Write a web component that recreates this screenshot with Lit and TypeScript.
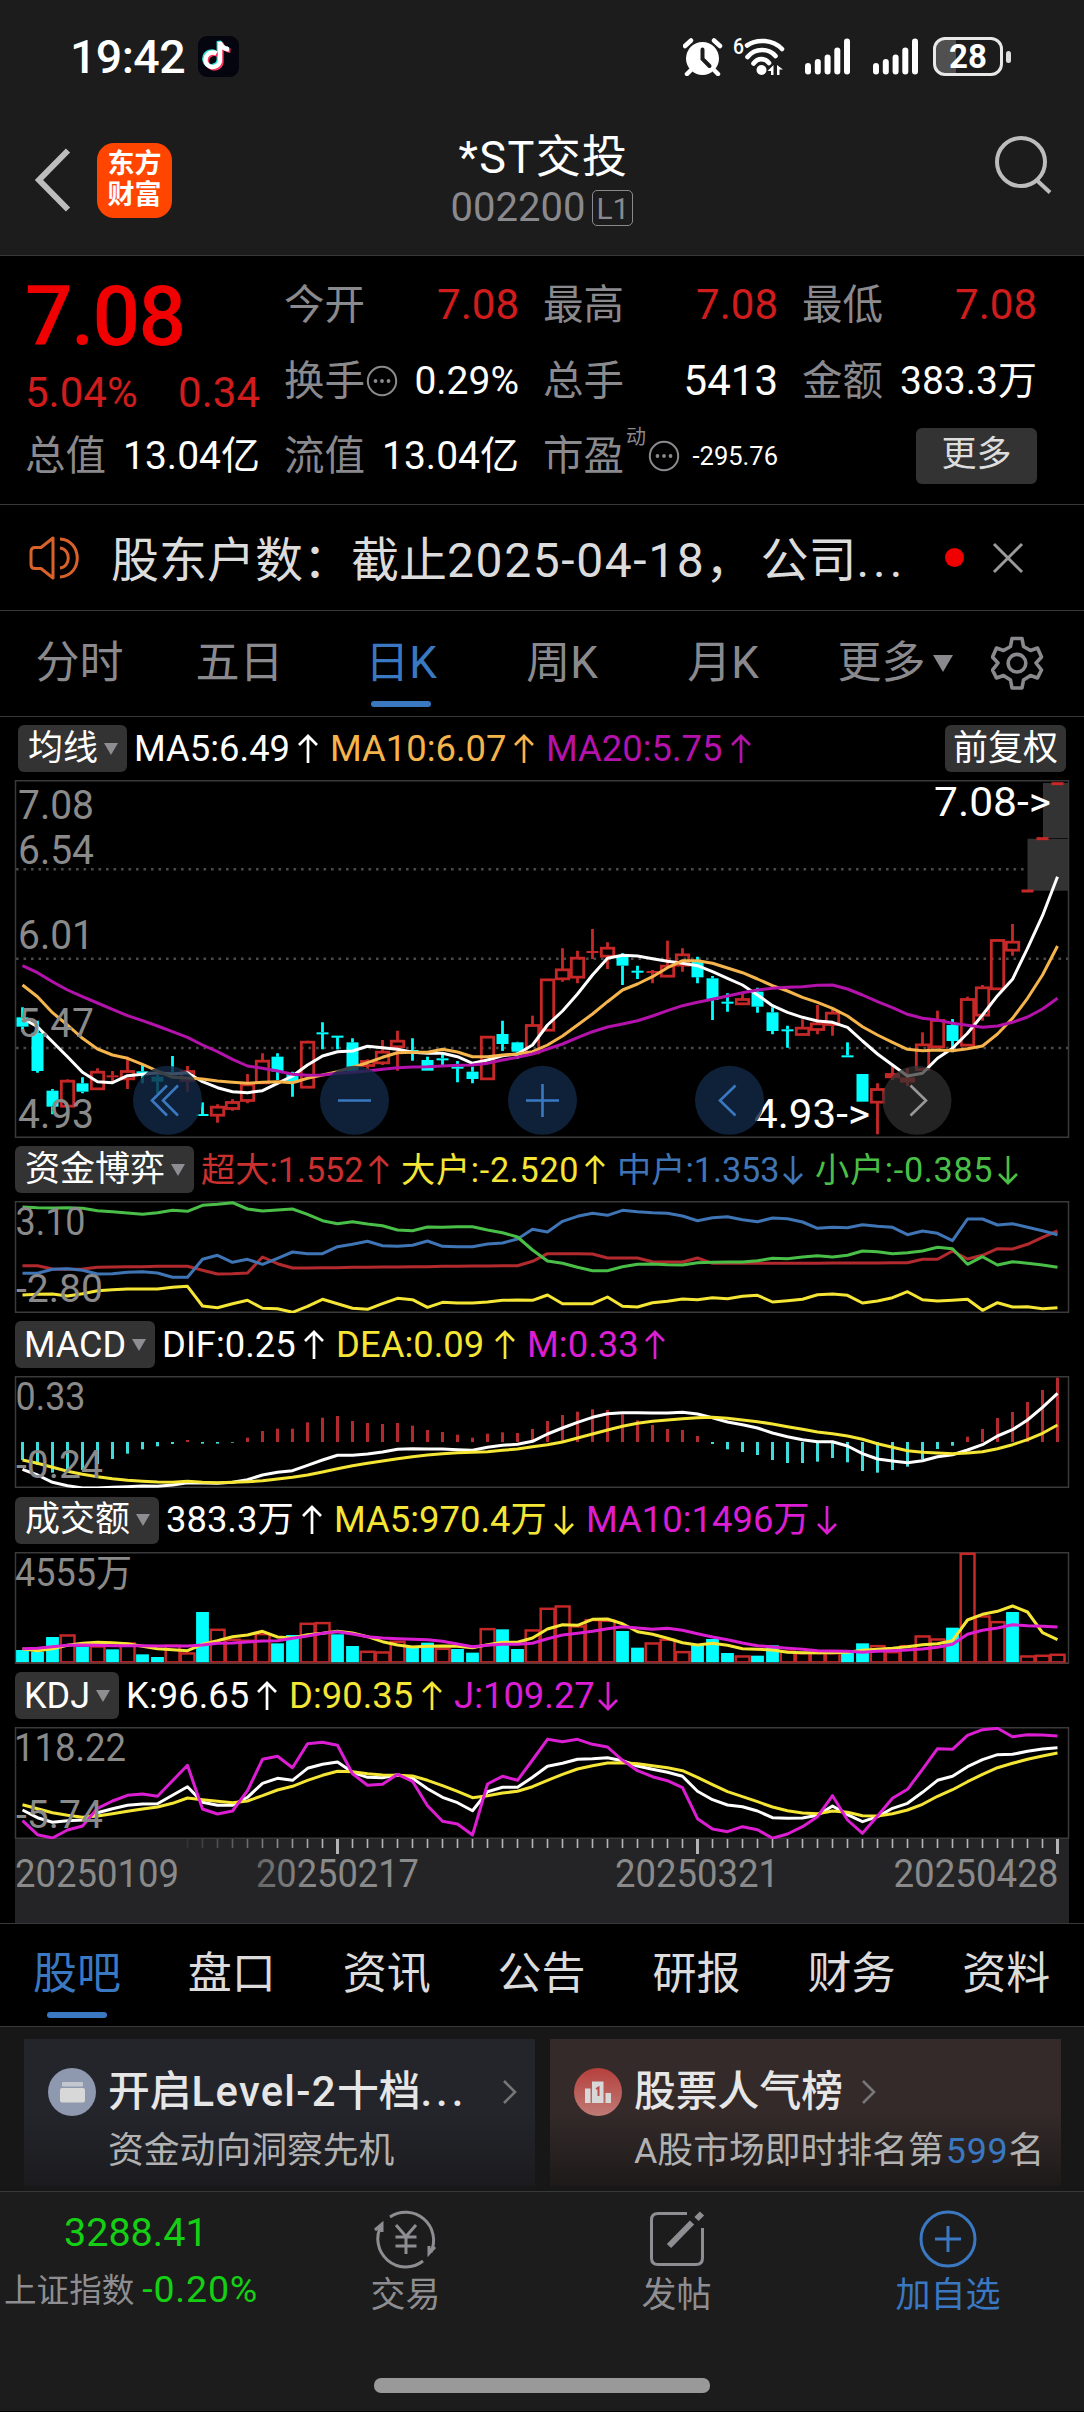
import { LitElement, html, svg, css } from "lit";
import { customElement } from "lit/decorators.js";
import { classMap } from "lit/directives/class-map.js";

/* ---------- chart data: 70 sessions, heights in thirds of a pixel ---------- */

type Candle = [string, number, number, number, number];

const X0 = 22.5;
const STEP = 15;
const cx = (i: number) => X0 + i * STEP;

const RED = "#c62828";
const CYAN = "#00ffff";

const CANDLES: Candle[] = [
  ["c", 712, 742, 770, 785], ["c", 752, 788, 903, 908], ["c", 957, 962, 1010, 1033], ["r", 928, 932, 1010, 1010],
  ["c", 922, 940, 965, 970], ["r", 895, 905, 958, 960], ["r", 903, 916, 922, 938], ["r", 860, 903, 928, 957],
  ["c", 885, 904, 909, 940], ["c", 915, 920, 935, 970], ["c", 858, 907, 912, 915], ["r", 888, 903, 933, 965],
  ["c", 997, 1032, 1038, 1038], ["r", 1003, 1010, 1037, 1058], ["r", 988, 996, 1017, 1022], ["r", 912, 943, 993, 1000],
  ["r", 850, 872, 940, 942], ["c", 850, 860, 905, 930], ["c", 905, 910, 938, 980], ["r", 812, 815, 953, 955],
  ["c", 757, 787, 792, 838], ["c", 797, 797, 802, 838], ["c", 805, 817, 903, 905], ["r", 868, 873, 888, 898],
  ["r", 810, 845, 880, 885], ["r", 782, 812, 832, 902], ["c", 805, 840, 845, 872], ["c", 860, 870, 902, 902],
  ["c", 852, 865, 870, 887], ["c", 873, 890, 895, 937], ["c", 890, 905, 927, 940], ["r", 798, 800, 928, 928],
  ["c", 752, 792, 822, 843], ["c", 815, 817, 845, 867], ["r", 737, 765, 850, 850], ["r", 628, 628, 782, 782],
  ["r", 535, 598, 628, 635], ["r", 542, 563, 623, 640], ["r", 477, 543, 547, 567], ["r", 517, 533, 560, 597],
  ["c", 550, 560, 587, 645], ["c", 587, 602, 607, 627], ["r", 600, 603, 608, 640], ["r", 512, 587, 620, 620],
  ["r", 535, 553, 587, 605], ["c", 560, 575, 622, 640], ["c", 618, 625, 690, 750], ["c", 670, 695, 700, 725],
  ["r", 672, 687, 703, 703], ["c", 653, 665, 710, 728], ["c", 712, 727, 783, 793], ["c", 767, 778, 783, 833],
  ["r", 748, 773, 795, 795], ["r", 705, 760, 780, 793], ["r", 715, 728, 765, 797], ["c", 817, 856, 862, 862],
  ["c", 912, 912, 995, 995], ["r", 940, 957, 998, 1093], ["r", 888, 912, 922, 930], ["r", 895, 925, 935, 948],
  ["r", 787, 823, 900, 900], ["r", 722, 750, 832, 832], ["c", 747, 765, 813, 847], ["r", 680, 687, 827, 827],
  ["r", 645, 652, 737, 752], ["r", 508, 510, 658, 658], ["r", 462, 515, 542, 557], ["r", 363, 363, 363, 363],
  ["r", 206, 206, 206, 206], ["r", 41, 41, 41, 41],
];

const MA5 = [745, 770, 815, 860, 907, 935, 938, 917, 913, 908, 912, 908, 935, 953, 965, 968, 962, 940, 918, 885, 858, 845, 843, 829, 833, 838, 847, 850, 850, 860, 880, 870, 857, 852, 825, 765, 723, 672, 615, 565, 556, 558, 566, 574, 580, 587, 605, 625, 645, 675, 707, 727, 742, 753, 757, 772, 813, 852, 885, 918, 910, 865, 835, 790, 735, 677, 628, 535, 437, 320];
const MA10 = [645, 680, 728, 765, 805, 837, 855, 865, 883, 903, 922, 924, 927, 933, 937, 940, 937, 935, 938, 925, 915, 905, 892, 878, 862, 848, 847, 847, 838, 846, 860, 860, 855, 852, 845, 825, 798, 765, 732, 695, 660, 642, 620, 593, 572, 572, 580, 594, 608, 627, 647, 663, 682, 697, 715, 738, 770, 795, 817, 838, 842, 840, 842, 836, 828, 792, 745, 685, 615, 528];
const MA20 = [587, 608, 635, 660, 680, 699, 718, 737, 752, 768, 785, 802, 825, 845, 868, 888, 895, 903, 913, 916, 915, 910, 907, 903, 898, 893, 891, 890, 888, 886, 885, 880, 870, 862, 852, 837, 822, 803, 785, 771, 762, 752, 738, 722, 707, 697, 688, 678, 668, 660, 655, 652, 650, 646, 645, 657, 675, 695, 713, 733, 745, 750, 760, 766, 772, 768, 757, 741, 717, 685];

const FLOW_SMALL = [201, 203, 204, 203, 205, 212, 215, 219, 223, 218, 211, 214, 196, 193, 188, 207, 213, 210, 207, 223, 242, 251, 245, 252, 257, 270, 272, 261, 262, 260, 260, 270, 278, 291, 330, 363, 370, 382, 392, 392, 380, 373, 372, 374, 375, 368, 367, 366, 366, 362, 355, 356, 351, 347, 351, 346, 333, 335, 341, 338, 333, 322, 326, 373, 350, 375, 365, 370, 375, 382];
const FLOW_MID = [400, 400, 388, 386, 391, 402, 401, 397, 395, 399, 412, 412, 358, 346, 367, 358, 373, 355, 336, 341, 341, 320, 313, 304, 317, 319, 316, 303, 319, 320, 320, 312, 309, 297, 268, 276, 244, 229, 220, 226, 211, 215, 218, 220, 228, 242, 233, 230, 239, 245, 234, 236, 246, 265, 262, 263, 254, 259, 262, 284, 273, 280, 302, 237, 237, 255, 251, 262, 272, 284];
const FLOW_SUPER = [377, 377, 387, 388, 387, 382, 381, 380, 380, 379, 379, 379, 391, 402, 401, 399, 351, 371, 384, 384, 383, 383, 382, 382, 381, 381, 380, 380, 379, 379, 378, 378, 377, 377, 364, 341, 341, 341, 342, 354, 354, 354, 365, 366, 366, 354, 370, 370, 370, 370, 370, 370, 370, 370, 369, 369, 369, 369, 368, 368, 358, 358, 333, 357, 346, 326, 327, 313, 292, 273];
const FLOW_BIG = [465, 463, 462, 468, 461, 452, 449, 447, 447, 447, 442, 439, 498, 503, 491, 481, 505, 506, 517, 499, 478, 491, 505, 508, 491, 475, 479, 502, 487, 489, 489, 486, 481, 480, 481, 465, 491, 491, 491, 471, 499, 501, 488, 484, 477, 479, 473, 476, 469, 466, 486, 482, 478, 464, 462, 466, 489, 483, 473, 455, 479, 483, 481, 478, 511, 488, 501, 500, 506, 503];

const MACD = [960, 975, 998, 998, 990, 972, 957, 941, 928, 919, 912, 900, 911, 911, 908, 893, 873, 866, 866, 847, 833, 828, 843, 849, 852, 849, 857, 870, 876, 884, 893, 881, 877, 879, 867, 843, 825, 815, 808, 810, 823, 841, 855, 867, 870, 888, 912, 928, 936, 945, 960, 969, 969, 965, 954, 967, 993, 998, 990, 980, 958, 927, 917, 890, 867, 834, 816, 786, 750, 713];
const DIF = [988, 1005, 1027, 1037, 1044, 1044, 1042, 1040, 1038, 1039, 1035, 1028, 1029, 1030, 1027, 1019, 1005, 997, 992, 976, 960, 946, 946, 942, 936, 928, 926, 927, 927, 929, 931, 922, 916, 913, 904, 882, 864, 847, 832, 821, 818, 818, 819, 819, 817, 822, 833, 846, 854, 864, 879, 890, 899, 905, 905, 918, 941, 957, 963, 968, 962, 950, 944, 930, 914, 888, 869, 840, 802, 760];
const DEA = [960, 970, 982, 994, 1003, 1010, 1016, 1021, 1024, 1026, 1027, 1024, 1027, 1028, 1027, 1025, 1022, 1017, 1012, 1005, 996, 986, 977, 970, 963, 956, 950, 945, 941, 938, 937, 935, 931, 927, 920, 914, 906, 894, 882, 870, 859, 850, 844, 840, 836, 833, 832, 835, 840, 845, 852, 860, 868, 876, 881, 888, 898, 911, 922, 932, 937, 939, 941, 939, 935, 926, 914, 899, 880, 855];

const VOLUME: [string, number][] = [
  ["c", 480], ["c", 485], ["c", 441], ["r", 434], ["c", 470], ["r", 467], ["c", 478], ["r", 458], ["c", 493], ["c", 501],
  ["r", 465], ["r", 488], ["c", 366], ["r", 417], ["r", 447], ["r", 450], ["r", 430], ["c", 460], ["c", 435], ["r", 399],
  ["r", 397], ["c", 433], ["c", 468], ["r", 483], ["r", 485], ["r", 453], ["c", 470], ["c", 458], ["r", 474], ["c", 477],
  ["c", 488], ["r", 415], ["c", 418], ["c", 477], ["r", 419], ["r", 354], ["r", 347], ["r", 407], ["r", 388], ["r", 390],
  ["c", 423], ["c", 473], ["r", 458], ["r", 447], ["r", 484], ["c", 465], ["c", 447], ["c", 489], ["r", 497], ["c", 497],
  ["c", 466], ["r", 482], ["r", 487], ["r", 487], ["r", 487], ["c", 487], ["c", 460], ["r", 466], ["r", 484], ["r", 466],
  ["r", 437], ["r", 446], ["c", 413], ["r", 189], ["r", 377], ["r", 394], ["c", 366], ["r", 497], ["r", 495], ["r", 492],
];
const VMA5 = [477, 482, 476, 466, 460, 457, 458, 461, 469, 476, 479, 482, 463, 452, 440, 435, 424, 441, 444, 434, 430, 424, 429, 440, 455, 465, 471, 469, 468, 469, 473, 464, 457, 457, 444, 417, 404, 406, 388, 387, 401, 425, 433, 445, 458, 465, 460, 466, 476, 478, 480, 487, 488, 488, 488, 487, 481, 478, 475, 470, 464, 461, 452, 390, 373, 364, 348, 366, 428, 449];
const VMA10 = [476, 475, 470, 466, 465, 466, 467, 467, 467, 468, 468, 468, 465, 460, 459, 456, 453, 452, 445, 438, 430, 425, 432, 440, 444, 446, 448, 449, 454, 462, 470, 466, 463, 463, 460, 446, 435, 430, 424, 416, 410, 414, 418, 415, 421, 431, 441, 449, 459, 467, 471, 475, 478, 482, 483, 484, 487, 484, 482, 480, 477, 472, 463, 433, 421, 414, 404, 407, 409, 411];

const K = [960, 983, 997, 992, 990, 968, 956, 946, 942, 941, 916, 890, 937, 946, 946, 922, 880, 865, 871, 835, 823, 816, 847, 862, 863, 854, 865, 896, 922, 938, 962, 905, 892, 892, 862, 829, 820, 808, 806, 803, 812, 828, 838, 847, 859, 904, 929, 945, 950, 963, 983, 985, 984, 976, 948, 974, 995, 980, 955, 940, 907, 871, 859, 830, 809, 794, 793, 784, 777, 773];
const D = [944, 956, 968, 976, 982, 978, 971, 964, 957, 951, 940, 924, 929, 934, 938, 933, 917, 900, 889, 871, 856, 844, 845, 851, 855, 856, 858, 871, 887, 904, 923, 917, 909, 904, 890, 871, 853, 837, 827, 819, 818, 821, 827, 833, 842, 862, 884, 905, 920, 935, 951, 962, 969, 971, 963, 967, 977, 978, 971, 960, 943, 919, 899, 875, 853, 833, 820, 808, 798, 789];
const J = [992, 1034, 1044, 1020, 1008, 955, 933, 916, 912, 919, 872, 826, 957, 972, 963, 902, 808, 799, 833, 761, 757, 766, 851, 886, 883, 853, 874, 947, 994, 1002, 1035, 882, 859, 871, 810, 748, 755, 748, 763, 771, 811, 842, 860, 872, 893, 986, 1017, 1025, 1010, 1019, 1045, 1032, 1010, 980, 917, 990, 1030, 978, 925, 898, 838, 776, 778, 736, 719, 715, 740, 734, 735, 738];

const line = (d: number[], off: number, color: string) => svg`
  <polyline fill="none" stroke=${color} stroke-width="3" stroke-linejoin="round"
    points=${d.map((v, i) => `${cx(i)},${(v / 3 - off).toFixed(1)}`).join(" ")} />`;

const label = (t: string, x: number, y: number, w: number, size = 38, fill = "#8a8a8a") => svg`
  <text x=${x} y=${y} font-size=${size} fill=${fill} textLength=${w} lengthAdjust="spacingAndGlyphs">${t}</text>`;

/* ---------- chart panels ---------- */

@customElement("chart-panel")
class ChartPanel extends LitElement {
  static properties = { kind: {} };
  declare kind: string;

  static styles = css`
    :host { display: block; }
    svg { display: block; }
    text { font-family: Roboto, "Noto Sans CJK SC", sans-serif; }
  `;

  private frame(h: number) {
    return svg`<rect x="15.5" y="0.75" width="1053" height=${h - 1.5} fill="none" stroke="#3a3a3a" stroke-width="1.5" />`;
  }

  private candle([t, hi, a, b, lo]: Candle, i: number) {
    const y = (v: number) => v / 3 - 10;
    const x = cx(i);
    const c = t === "r" ? RED : CYAN;
    if (hi === lo) return svg`<rect x=${x - 6} y=${y(a) - 1.5} width="12" height="3" fill=${c} />`;
    const wick = svg`
      <path d="M${x} ${y(hi)}V${y(a)}M${x} ${y(b)}V${y(lo)}" stroke=${c} stroke-width="2.8" />`;
    const body = t === "c" || b - a < 8
      ? svg`<rect x=${x - 6} y=${y(a)} width="12" height=${Math.max((b - a) / 3, 2)} fill=${c} />`
      : svg`<rect x=${x - 6.2} y=${y(a) + 0.5} width="12.4" height=${(b - a) / 3 - 1} fill="none" stroke=${c} stroke-width="2.8" />`;
    return svg`${wick}${body}`;
  }

  private main() {
    return html`<svg width="1084" height="358" viewBox="0 0 1084 358">
      ${[89.3, 178.7, 268].map((y) => svg`<path d="M16 ${y}H1068" stroke="#4a4a4a" stroke-width="2.6" stroke-dasharray="2.6 4.9" />`)}
      ${this.frame(358)}
      <rect x="1027.5" y="58.7" width="40.5" height="52" fill="#333" />
      <rect x="1043" y="3" width="25" height="55" fill="#333" />
      ${CANDLES.map((c, i) => this.candle(c, i))}
      ${line(MA5, 10, "#fff")}${line(MA10, 10, "#f5b44c")}${line(MA20, 10, "#b312ab")}
      ${label("7.08", 18, 39, 76, 40)}${label("6.54", 18, 84, 76, 40)}${label("6.01", 18, 169, 76, 40)}
      ${label("5.47", 18, 257, 76, 40)}${label("4.93", 18, 348, 76, 40)}
      ${label("7.08->", 934, 35.5, 117, 40, "#fff")}${label("4.93->", 754, 348, 116, 40, "#fff")}
      ${[167.5, 354.5, 542.5, 729.5].map((x) => svg`<circle cx=${x} cy="320.3" r="34.5" fill="rgba(17,40,68,.82)" />`)}
      <circle cx="917" cy="320.3" r="34.5" fill="rgba(48,48,48,.72)" />
      <g fill="none" stroke="#3a78c2" stroke-width="2.6">
        <path d="M167 305.5L152 320.5L167 335.5M178 305.5L163 320.5L178 335.5" />
        <path d="M338 320.5H371" />
        <path d="M526 320.5H559M542.5 304V337" />
        <path d="M735.5 305.5L720 320.5L735.5 335.5" />
        <path d="M910.5 305.5L926 320.5L910.5 335.5" stroke="#999" />
      </g>
    </svg>`;
  }

  private flow() {
    return html`<svg width="1084" height="112" viewBox="0 0 1084 112">
      ${this.frame(112)}
      ${line(FLOW_SUPER, 61, "#b22a2e")}${line(FLOW_BIG, 61, "#f5e636")}
      ${line(FLOW_MID, 61, "#3f74b5")}${line(FLOW_SMALL, 61, "#4abf48")}
      ${label("3.10", 15.5, 34, 70)}${label("-2.80", 16, 101.3, 87)}
    </svg>`;
  }

  private macd() {
    const z = 906 / 3 - 236;
    return html`<svg width="1084" height="112" viewBox="0 0 1084 112">
      ${this.frame(112)}
      ${MACD.map((v, i) => svg`<path d="M${cx(i)} ${z}V${v / 3 - 236}" stroke=${v > 906 ? "#40dcdc" : "#b22a2e"} stroke-width="3" />`)}
      ${line(DIF, 236, "#fff")}${line(DEA, 236, "#f5e636")}
      ${label("0.33", 15.5, 34, 70)}${label("-0.24", 16, 101.7, 87)}
    </svg>`;
  }

  private volume() {
    return html`<svg width="1084" height="112" viewBox="0 0 1084 112">
      ${this.frame(112)}
      ${VOLUME.map(([t, v], i) => {
        const y = v / 3 - 62;
        return t === "c"
          ? svg`<rect x=${cx(i) - 6.4} y=${y} width="12.8" height=${110.5 - y} fill=${CYAN} />`
          : svg`<rect x=${cx(i) - 6.8} y=${y + 0.8} width="13.8" height=${109.6 - y} fill="none" stroke=${RED} stroke-width="2.5" />`;
      })}
      <path d="M15 111H1068" stroke="#5a3434" stroke-width="1.6" />
      ${line(VMA5, 62, "#f5e636")}${line(VMA10, 62, "#dc1ed2")}
      ${label("4555万", 15, 34, 117)}
    </svg>`;
  }

  private kdj() {
    return html`<svg width="1084" height="112" viewBox="0 0 1084 112">
      ${this.frame(112)}
      ${line(K, 237, "#fff")}${line(D, 237, "#f5e636")}${line(J, 237, "#dc1ed2")}
      ${label("118.22", 14, 34, 112)}${label("-5.74", 16, 101.3, 87)}
    </svg>`;
  }

  private axis() {
    const ticks = Array.from({ length: 59 }, (_, n) => n + 11);
    const major = [21, 45, 69];
    return html`<svg width="1084" height="84" viewBox="0 0 1084 84">
      <defs><linearGradient id="fade"><stop offset="0" stop-color="#666" /><stop offset=".35" stop-color="#8a8a8a" /></linearGradient></defs>
      <rect x="15" width="1054" height="84" fill="#242426" />
      ${ticks.map((i) => {
        const big = major.includes(i);
        return svg`<path d="M${cx(i)} 0V${big ? 15 : 9}" stroke="#b4b4b4" stroke-width=${big ? 3 : 1.6} opacity=${Math.min(1, (i - 10) / 10)} />`;
      })}
      ${label("20250109", 15, 47.7, 164)}${label("20250217", 256, 47.7, 163, 38, "url(#fade)")}
      ${label("20250321", 615, 47.7, 164)}${label("20250428", 893.5, 47.7, 165)}
    </svg>`;
  }

  render() {
    switch (this.kind) {
      case "main": return this.main();
      case "flow": return this.flow();
      case "macd": return this.macd();
      case "volume": return this.volume();
      case "kdj": return this.kdj();
      default: return this.axis();
    }
  }
}

/* ---------- indicator legend ---------- */

type LegendItem = [text: string, color: string, dir: "up" | "down", width: number];

@customElement("chart-legend")
class ChartLegend extends LitElement {
  static properties = { name: {}, items: { attribute: false }, tail: {} };
  declare name: string;
  declare items: LegendItem[];
  declare tail?: string;

  static styles = css`
    :host { display: flex; align-items: center; height: 63px; padding: 0 18px 0 15px; box-sizing: border-box;
      font-size: 35px; line-height: 46px; color: #fff; white-space: nowrap; }
    :host([tall]) { height: 64px; }
    :host([first]) { padding-left: 18px; }
    .chip { height: 47px; box-sizing: border-box; background: #333; border-radius: 6px; display: flex; align-items: center;
      padding: 0 9px 0 10px; gap: 6px; margin-right: 7px; }
    .chip.latin { font-size: 36px; padding-left: 9px; }
    .tri { width: 0; height: 0; border: 7.5px solid transparent; border-top: 12px solid #8d8d92; border-bottom: 0; }
    .item { display: flex; align-items: center; font-size: 36.4px; }
    :host([dense]) .item { font-size: 34.2px; }
    .item svg { margin: 0 11px 0 8px; flex: none; }
    .neg { letter-spacing: .7px; }
    .tail { margin-left: auto; padding: 0 8px; margin-right: 0; }
  `;

  render() {
    const latin = /^[A-Z]+$/.test(this.name);
    return html`
      <div class=${classMap({ chip: true, latin })}><span>${this.name}</span><i class="tri"></i></div>
      ${this.items.map(([t, c, dir, w]) => html`
        <div class="item" style="color:${c}">
          <span class=${classMap({ neg: t.includes("-") })} style="width:${w}px">${t}</span>
          <svg width="22" height="32" viewBox="0 0 22 32" fill="none" stroke="currentColor" stroke-width="2.7">
            <path d=${dir === "up" ? "M11 30V3M2 12L11 3L20 12" : "M11 2V29M2 20L11 29L20 20"} />
          </svg>
        </div>`)}
      ${this.tail ? html`<div class="chip tail">${this.tail}</div>` : ""}
    `;
  }
}

/* ---------- page ---------- */

const dots = html`<svg class="dots" width="32" height="32" viewBox="0 0 32 32" fill="none" stroke="#8a8a8e" stroke-width="2">
  <circle cx="16" cy="16" r="14.2" /><g fill="#8a8a8e" stroke="none"><circle cx="9.5" cy="16" r="1.9" /><circle cx="16" cy="16" r="1.9" /><circle cx="22.5" cy="16" r="1.9" /></g></svg>`;

const bars = html`<svg class="bars" width="46" height="38" viewBox="0 0 46 38" fill="#fff">
  <rect x="0" y="25" width="6" height="11.5" rx="3" /><rect x="9.8" y="21" width="6" height="15.5" rx="3" />
  <rect x="19.6" y="16.5" width="6" height="20" rx="3" /><rect x="29.3" y="9.5" width="6" height="27" rx="3" />
  <rect x="39" y="0.5" width="6" height="36" rx="3" /></svg>`;

@customElement("app-root")
class AppRoot extends LitElement {
  static styles = css`
    :host { display: block; width: 1084px; height: 2412px; overflow: hidden; background: #000; color: #fff;
      font-family: Roboto, "Noto Sans CJK SC", sans-serif; white-space: nowrap; }
    svg { display: block; flex: none; }
    .top { background: #1c1c1c; height: 256px; box-sizing: border-box; border-bottom: 1.5px solid #383838; }
    .status { display: flex; align-items: center; height: 113px; padding: 0 74px 0 70px; }
    .clock { font-size: 46.5px; line-height: 50px; font-weight: 500; width: 128px; letter-spacing: -.6px; }
    .status .alarm { margin-left: auto; }
    .battery { display: flex; align-items: center; justify-content: center; width: 70px; height: 39px; box-sizing: border-box;
      border: 3px solid #e8e8e8; border-radius: 12px; background: linear-gradient(90deg, #505050 32%, transparent 32%);
      font-size: 33px; font-weight: 700; line-height: 33px; margin-left: 14px; }
    .nub { width: 5px; height: 12px; border-radius: 3px; background: #ddd; margin-left: 3px; margin-right: -1px; }
    .bars + .bars { margin-left: 22px; }
    .wifi { margin: 0 18px 0 2px; }
    .nav { display: grid; grid-template-columns: 300px 1fr 300px; height: 140px; }
    .left { display: flex; align-items: center; padding: 0 0 6px 33px; }
    .app { width: 75px; height: 75px; border-radius: 17px; background: #ff4500; margin-left: 22px; display: flex;
      flex-direction: column; align-items: center; justify-content: center; font-size: 27px; line-height: 31px; font-weight: 700; }
    .title { display: flex; flex-direction: column; align-items: center; padding-top: 19px; }
    .name { font-size: 45px; line-height: 51px; font-weight: 400; letter-spacing: 1.4px; padding-left: 3px; }
    .code { display: flex; align-items: center; font-size: 40px; line-height: 50px; color: #8a8a8e; gap: 7px; }
    .lv { border: 1.5px solid #8a8a8e; border-radius: 5px; font-size: 30px; line-height: 35px; height: 34px; width: 39px; text-align: center; }
    .search { justify-self: end; padding: 21px 30px 0 0; }

    .quote { display: grid; grid-template-columns: repeat(4, 235px); column-gap: 24px; grid-template-rows: 76px 75px 75px;
      height: 249px; box-sizing: border-box; padding: 11px 0 0 25px; border-bottom: 1.5px solid #383838; font-size: 42px; }
    .last { grid-row: span 2; color: #f00000; display: flex; flex-direction: column; }
    .price { font-size: 84px; font-weight: 500; line-height: 90px; padding-top: 5px; letter-spacing: -1.8px; }
    .chg { display: flex; justify-content: space-between; color: #d01c1c; font-size: 42px; line-height: 50px; padding-top: 6px; }
    .cell { display: flex; align-items: center; justify-content: space-between; line-height: 50px; }
    .k { color: #8a8a8e; font-size: 40.5px; display: flex; align-items: center; }
    .red { color: #d01c1c; }
    .mid { font-size: 39px; }
    .sup { font-size: 20px; line-height: 20px; align-self: flex-start; margin: -4px 1px 0 2px; }
    .small { font-size: 25.5px; }
    .dots { margin-left: 1px; }
    .more { justify-self: end; align-self: center; background: #333; border-radius: 6px; width: 121px; height: 56px; line-height: 54px;
      text-align: center; font-size: 35px; color: #ddd; }

    .notice { display: flex; align-items: center; height: 106px; box-sizing: border-box; border-bottom: 1.5px solid #383838;
      padding: 0 60px 0 29px; font-size: 48px; color: #dcdcdc; }
    .msg { margin-left: 31px; width: 834px; line-height: 60px; padding-top: 6px; }
    .num { letter-spacing: 1.6px; }
    .tailtxt { margin-left: 7px; }
    .ell { letter-spacing: 4px; }
    .dot { width: 19px; height: 19px; border-radius: 50%; background: #f00000; margin-right: 28px; }

    .tabs { display: grid; height: 106px; box-sizing: border-box; border-bottom: 1.5px solid #383838; color: #8a8a8e; font-size: 44px; }
    .periods { grid-template-columns: 159px 161px 162px 160px 162px 187px 93px; }
    .sections { grid-template-columns: repeat(7, 154.9px); height: 104px; color: #dcdcdc; border-top: 1.5px solid #383838; }
    .tab { display: flex; flex-direction: column; align-items: center; padding-top: 22px; line-height: 60px; }
    .sections .tab { padding: 20px 1px 0 0; }
    .on { color: #3a78c2; }
    .on::after { content: ""; width: 60px; height: 6px; border-radius: 3px; background: #3a78c2; margin-top: 8px; }
    .row { display: flex; align-items: center; gap: 7px; margin-left: -5px; }
    .tri { width: 0; height: 0; border: 10.5px solid transparent; border-top: 17px solid #8a8a8e; border-bottom: 0; }

    .cards { display: grid; grid-template-columns: 511px 511px; gap: 15px; background: #171717; height: 164px; padding: 12px 24px 0;
      box-sizing: border-box; }
    .card { height: 147px; box-sizing: border-box; padding: 27px 17px 0 24px; background: linear-gradient(#24252b 50%, #1b1b1f); }
    .warm { background: linear-gradient(#332a29 50%, #1e1a1a); }
    .head { display: flex; align-items: center; font-size: 41.8px; font-weight: 500; line-height: 52px; color: #e6e6e6; height: 52px; }
    .head > span { margin-left: 12px; }
    .lat { letter-spacing: 1.3px; }
    .chev { margin-left: auto; }
    .warm .chev { margin-left: 18px; }
    .sub { margin: 8px 0 0 60px; font-size: 35.8px; line-height: 50px; color: #b2b2b2; }
    .blue { color: #3a78c2; }
    .sub .blue { letter-spacing: .8px; margin-left: 2px; }

    .bottom { background: #1c1c1c; border-top: 1.5px solid #383838; height: 220px; box-sizing: border-box; display: grid; grid-template-rows: 1fr auto; }
    .acts { display: grid; grid-template-columns: 270px 271px 271px 272px; color: #8e8e92; font-size: 35px; text-align: center; }
    .act { display: flex; flex-direction: column; align-items: center; padding-top: 16px; line-height: 48px; }
    .act svg { margin-bottom: 2px; }
    .index { color: #14cf14; font-size: 39.5px; line-height: 50px; padding-top: 16px; text-align: left; }
    .index .val { padding-left: 64px; }
    .index .nm { font-size: 37.5px; padding: 7px 0 0 4px; line-height: 48px; letter-spacing: .8px; }
    .index .nm span { color: #8e8e92; font-size: 32.6px; margin-right: 8px; letter-spacing: 0; }
    .home { width: 336px; height: 15px; border-radius: 7px; background: #999; margin: 0 auto 18px; }
  `;

  private cell(k: unknown, v: string, cls = "") {
    return html`<div class="cell"><span class="k">${k}</span><span class=${cls}>${v}</span></div>`;
  }

  private tabs(items: string[], active: string) {
    return items.map((t) => html`<div class=${classMap({ tab: true, on: t === active })}>${t}</div>`);
  }

  render() {
    return html`
      <header class="top">
        <div class="status">
          <span class="clock">19:42</span>
          <svg width="41" height="41" viewBox="0 0 41 41">
            <rect width="41" height="41" rx="9" fill="#05050f" />
            <g fill="none" stroke-width="4.4">
              <path d="M18.5 17.5A7.3 7.3 0 1 0 22 25V6C23 10.5 26 13 31 13.5" stroke="#35e0dc" transform="translate(-1.2 -1)" />
              <path d="M18.5 17.5A7.3 7.3 0 1 0 22 25V6C23 10.5 26 13 31 13.5" stroke="#f5355d" transform="translate(1.5 1.3)" />
              <path d="M18.5 17.5A7.3 7.3 0 1 0 22 25V6C23 10.5 26 13 31 13.5" stroke="#fff" />
            </g>
          </svg>
          <svg class="alarm" width="40" height="38" viewBox="0 0 40 38">
            <circle cx="19.5" cy="20.5" r="16.5" fill="#fff" />
            <path d="M7 33L4 36M32 33L35 36M2 8L8 2.5M37 8L31 2.5" stroke="#fff" stroke-width="4.5" stroke-linecap="round" />
            <path d="M19.5 11.5V21L26.5 28" fill="none" stroke="#1c1c1c" stroke-width="4" stroke-linecap="round" />
          </svg>
          <svg class="wifi" width="62" height="54" viewBox="-8 -8 62 54">
            <text x="0" y="15.5" font-size="22" font-weight="500" fill="#fff" textLength="11" lengthAdjust="spacingAndGlyphs">6</text>
            <g fill="none" stroke="#fff" stroke-width="4.6" stroke-linecap="round">
              <path d="M14 7.5C24 0.5 40 1.5 49 11" /><path d="M14.5 19C22 9.5 36 10 42.5 18" /><path d="M20.5 25.5C25 19.5 32 20 36 25" />
            </g>
            <circle cx="28.5" cy="32" r="5" fill="#fff" />
            <path d="M40.5 27V37H38V33H34.5ZM44 37V27L50 31.5H46.5V37Z" fill="#fff" />
          </svg>
          ${bars}${bars}
          <div class="battery">28</div><i class="nub"></i>
        </div>
        <div class="nav">
          <div class="left">
            <svg width="42" height="64" viewBox="0 0 42 64" fill="none" stroke="#bdbdbd" stroke-width="6"><path d="M35 2.5L6 32L35 61.5" /></svg>
            <div class="app"><span>东方</span><span>财富</span></div>
          </div>
          <div class="title">
            <div class="name">*ST交投</div>
            <div class="code"><span>002200</span><span class="lv">L1</span></div>
          </div>
          <div class="search">
            <svg width="60" height="60" viewBox="0 0 60 60" fill="none" stroke="#bdbdbd" stroke-width="4"><circle cx="27" cy="28" r="24" /><path d="M42.5 46L56 58.5" /></svg>
          </div>
        </div>
      </header>

      <section class="quote">
        <div class="last">
          <div class="price">7.08</div>
          <div class="chg"><span>5.04%</span><span>0.34</span></div>
        </div>
        ${this.cell("今开", "7.08", "red")}${this.cell("最高", "7.08", "red")}${this.cell("最低", "7.08", "red")}
        ${this.cell(html`换手${dots}`, "0.29%", "mid")}${this.cell("总手", "5413")}${this.cell("金额", "383.3万", "mid")}
        ${this.cell("总值", "13.04亿", "mid")}${this.cell("流值", "13.04亿", "mid")}
        ${this.cell(html`市盈<span class="sup">动</span>${dots}`, "-295.76", "small")}
        <div class="more">更多</div>
      </section>

      <section class="notice">
        <svg width="51" height="46" viewBox="0 0 51 46" fill="none" stroke="#d9622b" stroke-width="3">
          <path d="M24 3V43L12 33.5H6Q2 33.5 2 29.5V16.5Q2 12.5 6 12.5H12Z" stroke-linejoin="round" />
          <path d="M31 4C53 5 55 40 31 42" /><path d="M31 13C42 14 42 32 31 33" />
        </svg>
        <div class="msg">股东户数：截止<span class="num">2025-04-18</span>，<span class="tailtxt">公司</span><span class="ell">...</span></div>
        <i class="dot"></i>
        <svg width="32" height="32" viewBox="0 0 32 32" stroke="#9a9a9a" stroke-width="3"><path d="M2 2L30 30M30 2L2 30" /></svg>
      </section>

      <nav class="tabs periods">
        ${this.tabs(["分时", "五日", "日K", "周K", "月K"], "日K")}
        <div class="tab"><span class="row">更多<i class="tri"></i></span></div>
        <svg width="54" height="106" viewBox="0 0 54 106" fill="none" stroke="#8a8a8e" stroke-width="3.6" stroke-linejoin="round">
          <path d="M22.5 28.5H32.5L34 36.5L41 40.5L48 38L52 47L46.5 53L52 60L48 68L41 65.5L34 70L32.5 78H22.5L21 70L14 65.5L7 68L3 60L8.5 53L3 47L7 38L14 40.5L21 36.5Z" transform="translate(-1.5 -1)" />
          <circle cx="26" cy="52.2" r="8.8" />
        </svg>
      </nav>

      <chart-legend first name="均线" tail="前复权" .items=${[["MA5:6.49", "#fff", "up", 155], ["MA10:6.07", "#f5b44c", "up", 175], ["MA20:5.75", "#b312ab", "up", 176]]}></chart-legend>
      <chart-panel kind="main"></chart-panel>
      <chart-legend dense name="资金博弈" .items=${[["超大:1.552", "#c9302f", "up", 159], ["大户:-2.520", "#f5e636", "up", 175], ["中户:1.353", "#3f74b5", "down", 157], ["小户:-0.385", "#4abf48", "down", 174]]}></chart-legend>
      <chart-panel kind="flow"></chart-panel>
      <chart-legend name="MACD" .items=${[["DIF:0.25", "#fff", "up", 133], ["DEA:0.09", "#f5e636", "up", 150], ["M:0.33", "#dc1ed2", "up", 109]]}></chart-legend>
      <chart-panel kind="macd"></chart-panel>
      <chart-legend tall name="成交额" .items=${[["383.3万", "#fff", "up", 127], ["MA5:970.4万", "#f5e636", "down", 211], ["MA10:1496万", "#dc1ed2", "down", 222]]}></chart-legend>
      <chart-panel kind="volume"></chart-panel>
      <chart-legend name="KDJ" .items=${[["K:96.65", "#fff", "up", 122], ["D:90.35", "#f5e636", "up", 124], ["J:109.27", "#dc1ed2", "down", 135]]}></chart-legend>
      <chart-panel kind="kdj"></chart-panel>
      <chart-panel kind="axis"></chart-panel>

      <nav class="tabs sections">
        ${this.tabs(["股吧", "盘口", "资讯", "公告", "研报", "财务", "资料"], "股吧")}
      </nav>

      <section class="cards">
        <div class="card">
          <div class="head">
            <svg width="48" height="48" viewBox="0 0 48 48"><circle cx="24" cy="24" r="24" fill="#8e98ae" /><rect x="14" y="14" width="21" height="4.5" rx="1" fill="#c3c7cf" /><rect x="12" y="20" width="25" height="14.5" rx="2" fill="#d8d8d8" /></svg>
            <span>开启<span class="lat">Level-2</span>十档<span class="ell">...</span></span>
            <svg class="chev" width="16" height="26" viewBox="0 0 16 26" fill="none" stroke="#777" stroke-width="2.6"><path d="M2 2L13 13L2 24" /></svg>
          </div>
          <div class="sub">资金动向洞察先机</div>
        </div>
        <div class="card warm">
          <div class="head">
            <svg width="48" height="48" viewBox="0 0 48 48">
              <defs><linearGradient id="g" x2="0" y2="1"><stop stop-color="#b5403c" /><stop offset="1" stop-color="#c07a76" /></linearGradient></defs>
              <circle cx="24" cy="24" r="24" fill="url(#g)" /><path d="M11 20.5H16.5V35H11ZM18 13.5H29.5V35H18ZM31.5 25H37V35H31.5Z" fill="#d8d8d8" />
              <path d="M22 21L24.5 19.5V28" fill="none" stroke="#b8504c" stroke-width="2" />
            </svg>
            <span>股票人气榜</span>
            <svg class="chev" width="16" height="26" viewBox="0 0 16 26" fill="none" stroke="#777" stroke-width="2.6"><path d="M2 2L13 13L2 24" /></svg>
          </div>
          <div class="sub">A股市场即时排名第<span class="blue">599</span>名</div>
        </div>
      </section>

      <footer class="bottom">
        <div class="acts">
          <div class="index">
            <div class="val">3288.41</div>
            <div class="nm"><span>上证指数</span>-0.20%</div>
          </div>
          <div class="act">
            <svg width="66" height="62" viewBox="0 0 66 62" fill="none" stroke="#8e8e92" stroke-width="3">
              <path d="M17 9A28 28 0 0 1 58 44M62 39L56 45.5V38" /><path d="M50 53A28 28 0 0 1 8.5 17M2 22L9 16V24" />
              <path d="M23 17L33 28.5L43 17M33 28V46M22.5 29H43.5M22.5 38H43.5" />
            </svg>
            <span>交易</span>
          </div>
          <div class="act">
            <svg width="60" height="62" viewBox="0 0 60 62" fill="none" stroke="#8e8e92" stroke-width="3">
              <path d="M40 5.5H11Q4.5 5.5 4.5 12V50Q4.5 56.5 11 56.5H49Q55.5 56.5 55.5 50V20" />
              <path d="M22 38L45 14.5M49.5 11L55 5.5" stroke-width="6" />
            </svg>
            <span>发帖</span>
          </div>
          <div class="act blue">
            <svg width="60" height="62" viewBox="0 0 60 62" fill="none" stroke="#3a78c2" stroke-width="3"><circle cx="30" cy="31" r="27" /><path d="M17 31H43M30 18V44" /></svg>
            <span>加自选</span>
          </div>
        </div>
        <div class="home"></div>
      </footer>
    `;
  }
}
